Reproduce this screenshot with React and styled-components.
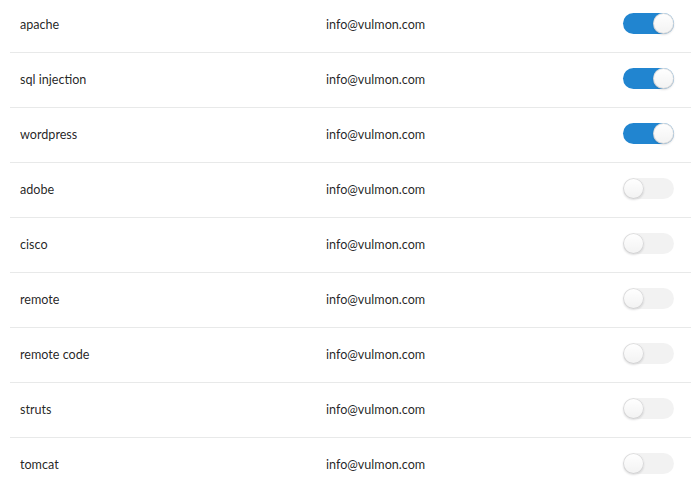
import React, { useState } from "react";
import styled, { createGlobalStyle } from "styled-components";

const Global = createGlobalStyle`
  html, body {
    margin: 0;
    padding: 0;
    background: #ffffff;
    font-family: Lato, "Helvetica Neue", Arial, sans-serif;
    color: rgba(0, 0, 0, 0.87);
  }
`;

const Table = styled.div`
  margin: -2px 0 0 10px;
  display: flex;
  flex-direction: column;
`;

const Row = styled.div`
  display: grid;
  grid-template-columns: 306px 1fr auto;
  align-items: center;
  height: 55px;
  box-sizing: border-box;
  padding: 0 17px 2px 10px;
  border-bottom: 1px solid rgba(34, 36, 38, 0.1);
  font-size: 12.6px;

  &:last-child {
    border-bottom: none;
  }
`;

const Cell = styled.div`
  white-space: nowrap;
`;

const Toggle = styled.button`
  position: relative;
  width: 51px;
  height: 21px;
  margin-top: -2px;
  padding: 0;
  border: none;
  border-radius: 500rem;
  cursor: pointer;
  background: ${(p) => (p.$on ? "#2185d0" : "rgba(0, 0, 0, 0.05)")};

  &::after {
    content: "";
    position: absolute;
    top: 0;
    left: ${(p) => (p.$on ? "30px" : "0")};
    width: 21px;
    height: 21px;
    border-radius: 50%;
    background: linear-gradient(transparent, rgba(0, 0, 0, 0.05)) #ffffff;
    box-shadow: 0 1px 2px 0 rgba(34, 36, 38, 0.15),
      0 0 0 1px rgba(34, 36, 38, 0.15) inset;
  }
`;

const items = [
  { name: "apache", on: true },
  { name: "sql injection", on: true },
  { name: "wordpress", on: true },
  { name: "adobe", on: false },
  { name: "cisco", on: false },
  { name: "remote", on: false },
  { name: "remote code", on: false },
  { name: "struts", on: false },
  { name: "tomcat", on: false },
];

export default function App() {
  const [state, setState] = useState(items.map((i) => i.on));
  return (
    <>
      <Global />
      <Table>
        {items.map((item, i) => (
          <Row key={item.name}>
            <Cell>{item.name}</Cell>
            <Cell>info@vulmon.com</Cell>
            <Toggle
              $on={state[i]}
              onClick={() => setState((s) => s.map((v, j) => (j === i ? !v : v)))}
            />
          </Row>
        ))}
      </Table>
    </>
  );
}
